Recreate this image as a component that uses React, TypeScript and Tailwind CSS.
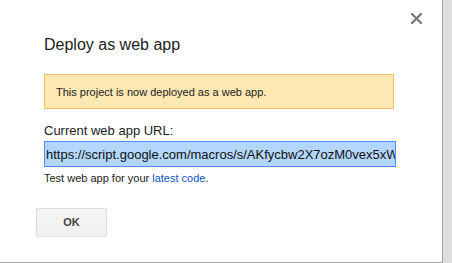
import React from 'react';

const CloseIcon: React.FC = () => (
  <svg width="11" height="11" viewBox="0 0 11 11" aria-hidden="true">
    <path d="M1 1L10 10M10 1L1 10" stroke="#767676" strokeWidth="2.2" strokeLinecap="square" />
  </svg>
);

const App: React.FC = () => {
  const url = 'https://script.google.com/macros/s/AKfycbw2X7ozM0vex5xWqL8d3nKpR0Zt/exec';

  return (
    <div className="flex h-[263px] w-full bg-[#dedede] font-['Liberation_Sans',Arial,sans-serif]">
      <div className="flex h-[263px] w-[443px] flex-col border-r border-b border-[#a3a3a3] bg-white">
        <div className="flex justify-end pt-[13px] pr-[20px]">
          <button className="flex h-[11px] w-[11px] items-center justify-center">
            <CloseIcon />
          </button>
        </div>

        <div className="flex flex-col pl-[44px]">
          <h2 className="mt-[11px] text-[16px] leading-[20px] text-[#222]">Deploy as web app</h2>

          <div className="mt-[19px] flex h-[35px] w-[350px] items-center border border-[#f5bd5e] bg-[#fde8b3] pl-[11px]">
            <span className="text-[11px] leading-[14px] text-[#222]">This project is now deployed as a web app.</span>
          </div>

          <label className="mt-[14px] text-[13px] leading-[16px] text-[#222]">Current web app URL:</label>

          <div className="mt-[2px] h-[26px] w-[352px] overflow-hidden whitespace-nowrap border border-[#4d90fe] bg-white">
            <span className="inline-block bg-[#b3d6fd] pl-[1px] pt-[1px] text-[13px] leading-[23px] text-[#111]">{url}</span>
          </div>

          <p className="mt-[4px] text-[11px] leading-[14px] text-[#222]">
            Test web app for your <a className="text-[#1155cc]">latest code</a>.
          </p>

          <button className="mt-[23px] -ml-[8px] h-[29px] w-[71px] rounded-[2px] border border-[#dcdcdc] bg-gradient-to-b from-[#f5f5f5] to-[#f0f0f0] text-[11px] font-bold text-[#444]">
            OK
          </button>
        </div>
      </div>
    </div>
  );
};

export default App;
